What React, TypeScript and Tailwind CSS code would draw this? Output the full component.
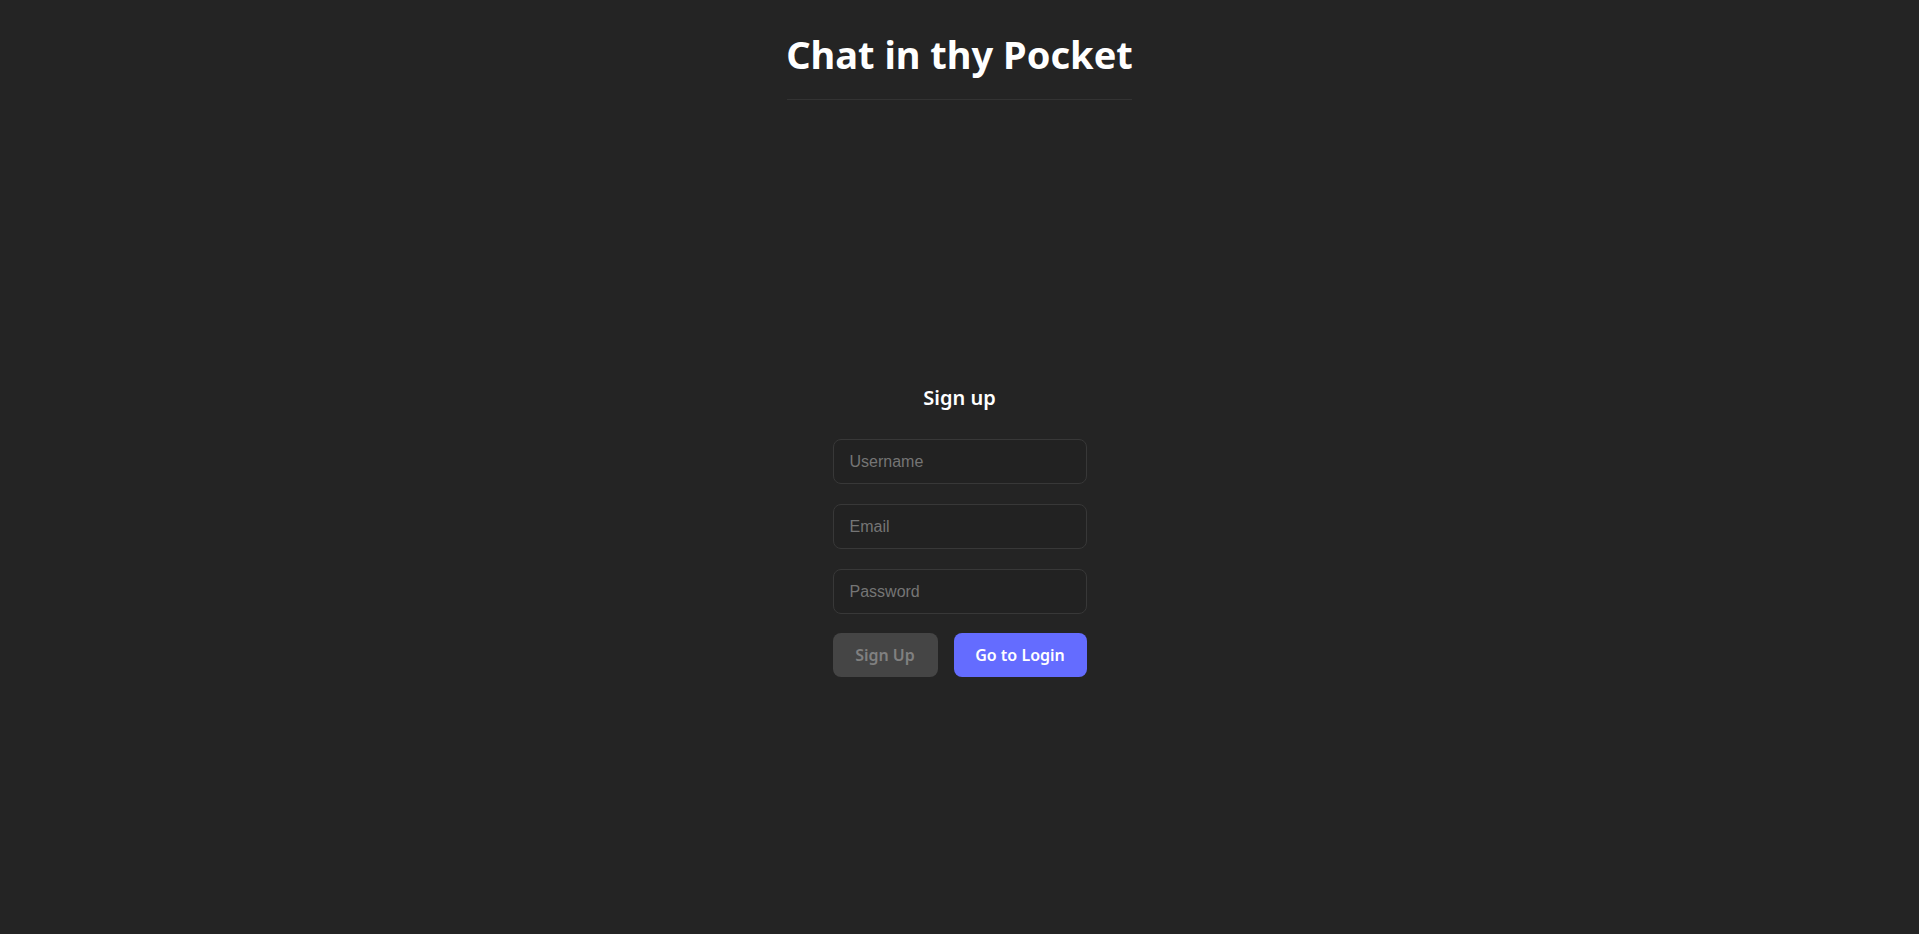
import React from "react";

export default function App() {
  return (
    <div
      className="min-h-screen w-full bg-[#242424] flex flex-col items-center"
      style={{ fontFamily: '"Noto Sans", "Open Sans", sans-serif' }}
    >
      <header className="pt-[30px] flex flex-col items-center">
        <h1 className="text-[38px] leading-[48px] font-bold text-white">Chat in thy Pocket</h1>
        <div className="mt-[21px] h-px w-[345px] bg-[#333333]" />
      </header>
      <main className="mt-[284px] flex flex-col items-center w-[254px]">
        <h2 className="text-[20px] leading-[28px] font-semibold text-white">Sign up</h2>
        <form className="mt-[27px] flex flex-col gap-[20px] w-full" onSubmit={(e) => e.preventDefault()}>
          <input
            placeholder="Username"
            className="h-[45px] w-full rounded-[8px] border border-[#383838] bg-[#222222] px-[16px] text-[16px] text-white placeholder:text-[#757575] outline-none"
            style={{ fontFamily: '"Liberation Sans", Arial, sans-serif' }}
          />
          <input
            placeholder="Email"
            className="h-[45px] w-full rounded-[8px] border border-[#383838] bg-[#222222] px-[16px] text-[16px] text-white placeholder:text-[#757575] outline-none"
            style={{ fontFamily: '"Liberation Sans", Arial, sans-serif' }}
          />
          <input
            type="password"
            placeholder="Password"
            className="h-[45px] w-full rounded-[8px] border border-[#383838] bg-[#222222] px-[16px] text-[16px] text-white placeholder:text-[#757575] outline-none"
            style={{ fontFamily: '"Liberation Sans", Arial, sans-serif' }}
          />
          <div className="mt-[-1px] flex gap-[16px]">
            <button
              type="submit"
              className="h-[44px] w-[105px] rounded-[8px] bg-[#454545] text-[16px] font-semibold text-[#808080]"
            >
              Sign Up
            </button>
            <button
              type="button"
              className="h-[44px] w-[133px] rounded-[8px] bg-[#646cff] text-[16px] font-semibold text-white"
            >
              Go to Login
            </button>
          </div>
        </form>
      </main>
    </div>
  );
}
